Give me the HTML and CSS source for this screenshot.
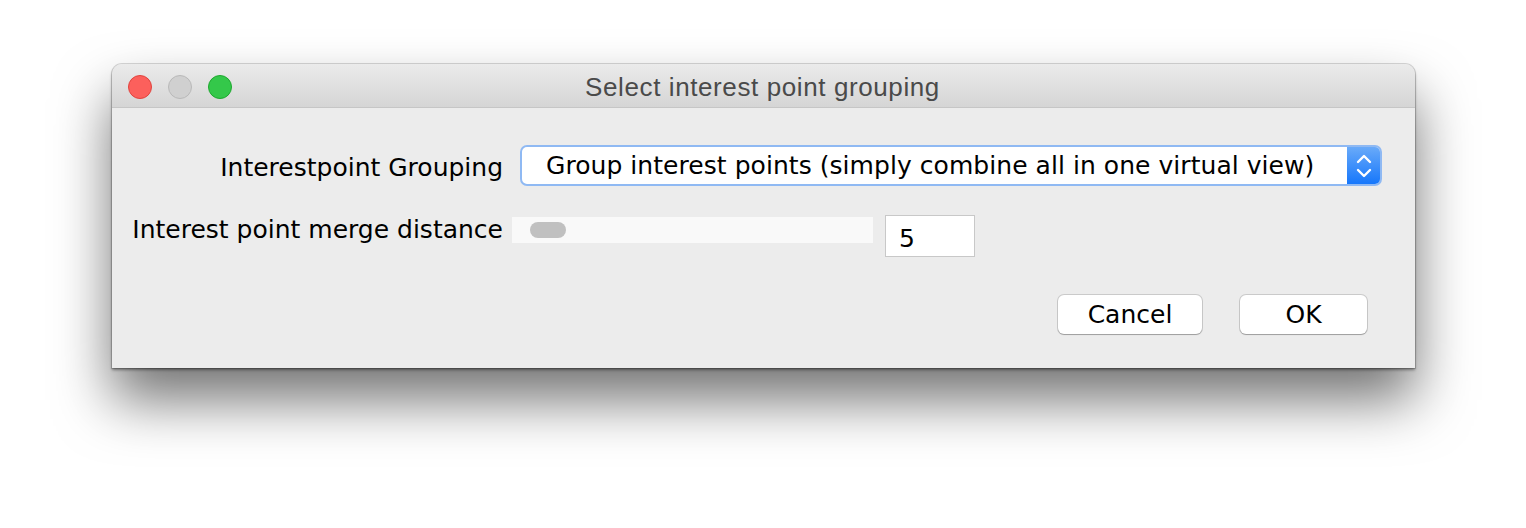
FILE: index.html
```html
<!DOCTYPE html>
<html>
<head>
<meta charset="utf-8">
<link rel="stylesheet" href="styles.css">
</head>
<body>
<div class="window">
  <div class="titlebar">
    <div class="lights">
      <span class="light red"></span>
      <span class="light gray"></span>
      <span class="light green"></span>
    </div>
    <div class="title">Select interest point grouping</div>
  </div>
  <div class="content">
    <div class="row row1">
      <div class="label">Interestpoint Grouping</div>
      <div class="select">
        <span class="select-text">Group interest points (simply combine all in one virtual view)</span>
        <span class="select-btn">
          <svg width="20" height="28" viewBox="0 0 20 28"><path d="M4 10 L10 4 L16 10" fill="none" stroke="#fff" stroke-width="2.4" stroke-linecap="round" stroke-linejoin="round"/><path d="M4 18 L10 24 L16 18" fill="none" stroke="#fff" stroke-width="2.4" stroke-linecap="round" stroke-linejoin="round"/></svg>
        </span>
      </div>
    </div>
    <div class="row row2">
      <div class="label">Interest point merge distance</div>
      <div class="slider"><span class="thumb"></span></div>
      <div class="field">5</div>
    </div>
    <div class="buttons">
      <button class="btn cancel">Cancel</button>
      <button class="btn ok">OK</button>
    </div>
  </div>
</div>
</body>
</html>
```
FILE: styles.css
```css
html, body {
  margin: 0;
  padding: 0;
  background: #ffffff;
}
body {
  width: 1526px;
  height: 528px;
  overflow: hidden;
  padding-top: 64px;
  padding-left: 112px;
  box-sizing: border-box;
  font-family: "DejaVu Sans", sans-serif;
}
.window {
  width: 1303px;
  height: 304px;
  background: #ececec;
  border-radius: 10px 10px 0 0;
  box-shadow: 0 0 0 1px rgba(0,0,0,0.14), 0 32px 56px rgba(0,0,0,0.55), 0 2px 3px rgba(0,0,0,0.4);
  display: flex;
  flex-direction: column;
}
.titlebar {
  height: 43px;
  border-bottom: 1px solid #c6c6c6;
  background: linear-gradient(#ebebeb, #d5d5d5);
  border-radius: 10px 10px 0 0;
  display: flex;
  align-items: center;
  position: relative;
}
.lights {
  display: flex;
  gap: 16px;
  padding-left: 16px;
  padding-top: 2px;
}
.light {
  width: 24px;
  height: 24px;
  border-radius: 50%;
  box-sizing: border-box;
}
.red { background: #fc605c; border: 1px solid #e0443e; }
.gray { background: #d0d0d0; border: 1px solid #b9b9b9; }
.green { background: #34c84a; border: 1px solid #1ea82f; }
.title {
  position: absolute;
  left: 0;
  right: 0;
  top: 0;
  bottom: 0;
  display: flex;
  align-items: center;
  justify-content: center;
  font-family: "Liberation Sans", sans-serif;
  font-size: 26px;
  letter-spacing: 0.6px;
  color: #4a4a4a;
  padding-top: 3px;
  padding-right: 2px;
}
.content {
  flex: 1;
  padding: 37px 0 0 0;
  display: flex;
  flex-direction: column;
}
.row {
  display: flex;
  align-items: center;
}
.label {
  width: 391px;
  text-align: right;
  font-size: 25px;
  color: #000;
  flex: none;
}
.row1 .label { padding-top: 4px; }
.select {
  margin-left: 17px;
  width: 862px;
  height: 41px;
  box-sizing: border-box;
  background: #fff;
  border: 2px solid #8fb9f3;
  border-radius: 7px;
  display: flex;
  align-items: center;
  justify-content: space-between;
  overflow: hidden;
}
.select-text {
  padding-left: 24px;
  font-size: 25px;
  letter-spacing: 0.05px;
  color: #000;
  white-space: nowrap;
}
.select-btn {
  width: 33px;
  height: 100%;
  background: linear-gradient(#69aaf9, #1677fb);
  display: flex;
  align-items: center;
  justify-content: center;
}
.row2 {
  margin-top: 29px;
  align-items: flex-start;
}
.slider {
  margin-left: 9px;
  margin-top: 2px;
  width: 361px;
  height: 26px;
  background: #f9f9f9;
  display: flex;
  align-items: center;
}
.thumb {
  margin-left: 18px;
  width: 36px;
  height: 16px;
  border-radius: 8px;
  background: #c0c0c0;
}
.field {
  margin-left: 12px;
  width: 90px;
  height: 42px;
  box-sizing: border-box;
  background: #fff;
  border: 1px solid #c8c8c8;
  padding-left: 13px;
  padding-top: 8px;
  font-size: 25px;
  color: #000;
}
.buttons {
  margin-top: 38px;
  display: flex;
  justify-content: flex-end;
  gap: 38px;
  padding-right: 48px;
}
.btn {
  height: 39px;
  background: #fff;
  border: none;
  border-radius: 6px;
  box-shadow: 0 0 0 1px rgba(0,0,0,0.14), 0 1px 1px rgba(0,0,0,0.22);
  font-family: "DejaVu Sans", sans-serif;
  font-size: 25px;
  color: #000;
  padding: 0;
}
.cancel { width: 144px; }
.ok { width: 127px; }
```
